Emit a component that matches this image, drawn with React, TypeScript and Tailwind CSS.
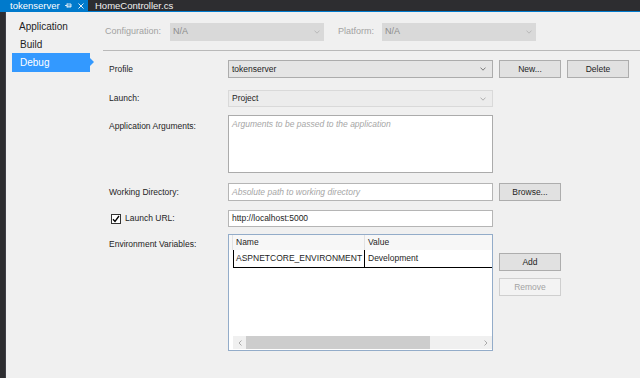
import React from 'react';

function Chevron({ color = '#6d6d6d' }: { color?: string }) {
  return (
    <svg width="6" height="4" viewBox="0 0 6 4" className="shrink-0">
      <path d="M0.5 0.6 L3 3.2 L5.5 0.6" fill="none" stroke={color} strokeWidth="0.9" />
    </svg>
  );
}

function Button({ label, disabled = false, className = '' }: { label: string; disabled?: boolean; className?: string }) {
  return (
    <div
      className={`w-[62px] h-[18px] flex items-center justify-center text-[8.5px] border ${
        disabled ? 'bg-[#f3f3f3] border-[#cfcfcf] text-[#a3a3a3]' : 'bg-[#e1e1e1] border-[#adadad] text-[#1e1e1e]'
      } ${className}`}
    >
      {label}
    </div>
  );
}

function Row({ label, className = '', children }: { label: React.ReactNode; className?: string; children: React.ReactNode }) {
  return (
    <div className={`flex ${className}`}>
      <div className="w-[119px] shrink-0 text-[8.5px] text-[#1e1e1e] flex items-center">{label}</div>
      {children}
    </div>
  );
}

export default function App() {
  return (
    <div className="w-[640px] h-[378px] overflow-hidden bg-[#f0f0f0] flex flex-col font-['Liberation_Sans',Arial,sans-serif]">
      {/* Document tabs */}
      <div className="h-[11px] bg-[#2d2d30] flex shrink-0">
        <div className="w-[88px] bg-[#007acc] flex items-center pl-[10px] pr-[4px] text-white text-[9.5px] leading-none">
          <span>tokenserver</span>
          <svg width="7" height="5" viewBox="0 0 7 5" className="ml-auto">
            <path d="M0 2.5 H2 M2 0.5 V4.5 M2 1 H6 V4 H2 M2 3 H6" fill="none" stroke="#ffffff" strokeWidth="0.8" />
          </svg>
          <svg width="6" height="6" viewBox="0 0 6 6" className="ml-[6px]">
            <path d="M0.5 0.5 L5.5 5.5 M5.5 0.5 L0.5 5.5" stroke="#ffffff" strokeWidth="0.9" />
          </svg>
        </div>
        <div className="pl-[7px] text-[#f1f1f1] text-[9.5px] leading-none flex items-center">HomeController.cs</div>
      </div>
      <div className="h-[1px] bg-[#007acc] shrink-0" />

      <div className="flex flex-1">
        <div className="w-[6px] bg-[#2d2d30] border-r border-[#3f3f46]" />

        {/* Left nav */}
        <nav className="w-[94px] shrink-0 pt-[5px] pl-[6px] flex flex-col text-[10px] text-[#1e1e1e]">
          <div className="h-[18px] pl-[7px] flex items-center">Application</div>
          <div className="h-[18px] pl-[8px] flex items-center">Build</div>
          <div className="relative h-[19px] w-[78px] pl-[8px] flex items-center bg-[#3399ff] text-white">
            Debug
            <div className="absolute right-[-4px] top-[5px] w-0 h-0 border-y-[4px] border-y-transparent border-l-[4px] border-l-[#3399ff]" />
          </div>
        </nav>

        {/* Main */}
        <main className="flex-1 flex flex-col pl-[3px]">
          <div className="mt-[11px] h-[18px] pl-[2px] flex items-center text-[9px] text-[#a2a2a2]">
            <span className="w-[65px]">Configuration:</span>
            <div className="w-[154px] h-full bg-[#d9d9d9] flex items-center pl-[3px] pr-[4px] text-[#8c8c8c]">
              <span>N/A</span>
              <span className="ml-auto"><Chevron color="#b5b5b5" /></span>
            </div>
            <span className="ml-[14px] w-[44px]">Platform:</span>
            <div className="w-[154px] h-full bg-[#d9d9d9] flex items-center pl-[3px] pr-[4px] text-[#8c8c8c]">
              <span>N/A</span>
              <span className="ml-auto"><Chevron color="#b5b5b5" /></span>
            </div>
          </div>

          <div className="mt-[9px] h-[1px] bg-[#b9b9b9]" />

          <div className="pl-[6px] flex flex-col">
            <Row label="Profile" className="mt-[9px] h-[18px]">
              <div className="w-[265px] h-full bg-[#e5e5e5] border border-[#acacac] flex items-center pl-[3px] pr-[6px] text-[8.5px] text-[#1e1e1e]">
                <span>tokenserver</span>
                <span className="ml-auto"><Chevron /></span>
              </div>
              <Button label="New..." className="ml-[6px]" />
              <Button label="Delete" className="ml-[6px]" />
            </Row>

            <Row label="Launch:" className="mt-[12px] h-[17px]">
              <div className="w-[265px] h-full bg-[#ececec] border border-[#d9d9d9] flex items-center pl-[3px] pr-[6px] text-[8.5px] text-[#1e1e1e]">
                <span>Project</span>
                <span className="ml-auto"><Chevron color="#a8a8a8" /></span>
              </div>
            </Row>

            <div className="mt-[8px] h-[58px] flex">
              <div className="w-[119px] shrink-0 pt-[5px] text-[8.5px] text-[#1e1e1e]">Application Arguments:</div>
              <div className="w-[265px] h-full bg-white border border-[#ababab] pl-[3px] pt-[2px] text-[8.5px] italic text-[#a6a6a6]">
                Arguments to be passed to the application
              </div>
            </div>

            <Row label="Working Directory:" className="mt-[10px] h-[18px]">
              <div className="w-[265px] h-full bg-white border border-[#b5b5b5] flex items-center pl-[3px] text-[8.5px] italic text-[#a6a6a6]">
                Absolute path to working directory
              </div>
              <Button label="Browse..." className="ml-[6px]" />
            </Row>

            <Row
              label={
                <div className="flex items-center">
                  <div className="w-[10px] h-[10px] ml-[2px] bg-white border border-[#333333] flex items-center justify-center">
                    <svg width="8" height="8" viewBox="0 0 8 8">
                      <path d="M1 4.2 L3 6.4 L7 1" fill="none" stroke="#000000" strokeWidth="1.3" />
                    </svg>
                  </div>
                  <span className="ml-[4px]">Launch URL:</span>
                </div>
              }
              className="mt-[9px] h-[17px]"
            >
              <div className="w-[265px] h-full bg-white border border-[#b5b5b5] flex items-center pl-[3px] text-[8.5px] text-[#1e1e1e]">
                http://localhost:5000
              </div>
            </Row>

            <div className="mt-[7px] h-[117px] flex">
              <div className="w-[119px] shrink-0 pt-[4px] text-[8.5px] text-[#1e1e1e]">Environment Variables:</div>
              <div className="w-[265px] h-full bg-white border border-[#93acc9] flex flex-col text-[8.5px] text-[#1e1e1e]">
                <div className="h-[15px] flex bg-[#f7f7f7] shrink-0">
                  <div className="w-[4px] border-r border-[#e2e2e2]" />
                  <div className="w-[132px] pl-[3px] flex items-center border-r border-[#e2e2e2]">Name</div>
                  <div className="flex-1 pl-[3px] flex items-center">Value</div>
                </div>
                <div className="h-[18px] flex shrink-0">
                  <div className="w-[4px]" />
                  <div className="flex-1 flex border-l border-b border-black">
                    <div className="w-[131px] pl-[2px] flex items-center border-r border-black">ASPNETCORE_ENVIRONMENT</div>
                    <div className="flex-1 pl-[3px] flex items-center">Development</div>
                  </div>
                </div>
                <div className="flex-1" />
                <div className="ml-[4px] mb-[1px] h-[13px] bg-[#f0f0f0] flex items-center shrink-0">
                  <div className="w-[13px] flex justify-center">
                    <svg width="4" height="6" viewBox="0 0 4 6"><path d="M3.5 0.5 L1 3 L3.5 5.5" fill="none" stroke="#a0a0a0" strokeWidth="0.9" /></svg>
                  </div>
                  <div className="w-[184px] h-full bg-[#cdcdcd]" />
                  <div className="flex-1" />
                  <div className="w-[13px] flex justify-center">
                    <svg width="4" height="6" viewBox="0 0 4 6"><path d="M0.5 0.5 L3 3 L0.5 5.5" fill="none" stroke="#a0a0a0" strokeWidth="0.9" /></svg>
                  </div>
                </div>
              </div>
              <div className="ml-[6px] flex flex-col">
                <Button label="Add" className="mt-[19px]" />
                <Button label="Remove" disabled className="mt-[7px]" />
              </div>
            </div>
          </div>
        </main>
      </div>
    </div>
  );
}
